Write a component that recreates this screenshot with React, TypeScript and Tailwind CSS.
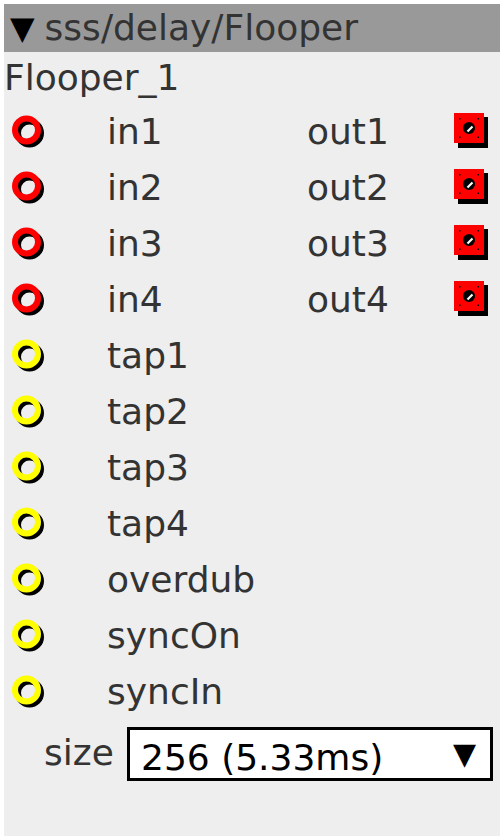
import React from 'react';

const inputs = [
  { name: 'in1', out: 'out1', color: '#ff0000' },
  { name: 'in2', out: 'out2', color: '#ff0000' },
  { name: 'in3', out: 'out3', color: '#ff0000' },
  { name: 'in4', out: 'out4', color: '#ff0000' },
  { name: 'tap1', color: '#ffff00' },
  { name: 'tap2', color: '#ffff00' },
  { name: 'tap3', color: '#ffff00' },
  { name: 'tap4', color: '#ffff00' },
  { name: 'overdub', color: '#ffff00' },
  { name: 'syncOn', color: '#ffff00' },
  { name: 'syncIn', color: '#ffff00' },
];

function Inlet({ color }: { color: string }) {
  return (
    <svg width="40" height="40" viewBox="0 0 40 40">
      <circle cx="19.5" cy="21" r="11.5" fill="none" stroke="#000" strokeWidth="6" />
      <circle cx="16.5" cy="18" r="11.5" fill="none" stroke={color} strokeWidth="6" />
    </svg>
  );
}

function Outlet() {
  return (
    <svg width="40" height="40" viewBox="0 0 40 40">
      <rect x="5" y="5" width="30" height="31" fill="#000" />
      <rect x="1" y="1" width="30" height="30" fill="#ff0000" />
      <circle cx="16" cy="16" r="6" fill="#000" />
      <path d="M14.5 19.5 L19.5 14.5" stroke="#fff" strokeWidth="2.2" />
      <rect x="6" y="6" width="1.5" height="1.5" fill="#000" />
      <rect x="24.5" y="6" width="1.5" height="1.5" fill="#000" />
      <rect x="6" y="24.5" width="1.5" height="1.5" fill="#000" />
      <rect x="24.5" y="24.5" width="1.5" height="1.5" fill="#000" />
    </svg>
  );
}

export default function App() {
  return (
    <div className="w-[504px] h-[840px] bg-white p-1 font-['DejaVu_Sans',sans-serif] text-[#333333]">
      <div className="h-full bg-[#eeeeee] flex flex-col">
        <div className="h-[48px] bg-[#999999] flex items-center pl-[6px] text-[36px] leading-none whitespace-nowrap">
          <span className="text-black text-[32px]">▼</span>
          <span className="ml-[10px]">sss/delay/Flooper</span>
        </div>
        <div className="h-[52px] flex items-center text-[36px] leading-none">Flooper_1</div>
        {inputs.map((row) => (
          <div key={row.name} className="h-[56px] flex items-center text-[36px] leading-none">
            <div className="w-[103px] pl-[6px] flex items-center">
              <Inlet color={row.color} />
            </div>
            <div className="w-[200px]">{row.name}</div>
            <div className="w-[146px]">{row.out}</div>
            {row.out && <Outlet />}
          </div>
        ))}
        <div className="flex items-start mt-[7px]">
          <div className="w-[123px] pl-[40px] text-[36px] leading-none pt-[8px]">size</div>
          <div className="w-[366px] h-[54px] border-[3px] border-black bg-white flex items-center justify-between pl-[11px] pr-[14px] text-black text-[36px] leading-none">
            <span className="mt-[8px]">256 (5.33ms)</span>
            <span className="text-[30px]">▼</span>
          </div>
        </div>
      </div>
    </div>
  );
}
